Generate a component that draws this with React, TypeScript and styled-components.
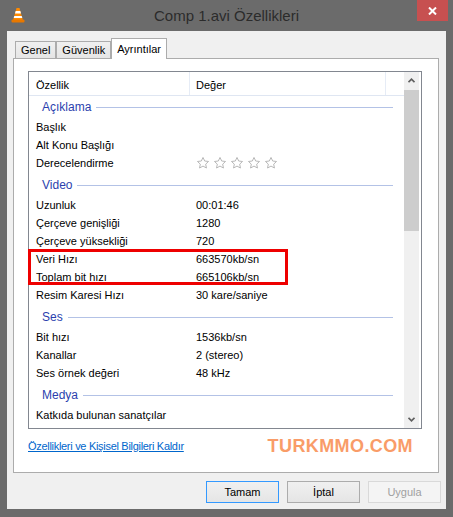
import React from "react";
import styled, { createGlobalStyle } from "styled-components";

const GlobalStyle = createGlobalStyle`
  html, body {
    margin: 0;
    padding: 0;
    background: #6b6b6b;
  }
  body {
    font-family: "Liberation Sans", Arial, sans-serif;
    font-size: 11px;
    color: #000;
  }
  *, *::before, *::after {
    box-sizing: border-box;
  }
`;

const Window = styled.div`
  width: 453px;
  height: 517px;
  background: #6b6b6b;
  display: flex;
  flex-direction: column;
`;

const TitleBar = styled.div`
  height: 31px;
  display: grid;
  grid-template-columns: 1fr auto 1fr;
  align-items: start;
`;

const AppIcon = styled.div`
  padding: 7px 0 0 11px;
  line-height: 0;
`;

const Title = styled.div`
  padding-top: 7px;
  font-size: 15px;
  line-height: 18px;
  color: #2b2b2b;
  white-space: nowrap;
`;

const CloseButton = styled.div`
  justify-self: end;
  margin-right: 5px;
  width: 31px;
  height: 21px;
  background: #c75050;
  display: flex;
  align-items: center;
  justify-content: center;
`;

const Client = styled.div`
  flex: 1;
  margin: 0 7px 8px;
  background: #f0f0f0;
  padding: 7px 0 6px;
  display: flex;
  flex-direction: column;
`;

const TabRow = styled.div`
  height: 20px;
  margin-left: 8px;
  display: flex;
  align-items: flex-end;
  position: relative;
  z-index: 1;
`;

const Tab = styled.div<{ $active?: boolean }>`
  height: ${p => (p.$active ? "21px" : "17px")};
  margin-bottom: ${p => (p.$active ? "-1px" : "0")};
  padding: ${p => (p.$active ? "3px 5px 0" : "1px 5px 0")};
  border: 1px solid #acacac;
  border-bottom: none;
  background: ${p => (p.$active ? "#fff" : "linear-gradient(#f0f0f0, #e5e5e5)")};
  line-height: 14px;
  white-space: nowrap;
`;

const Panel = styled.div`
  height: 415px;
  margin: 0 7px 0 6px;
  border: 1px solid #acacac;
  background: #fff;
  padding: 12px 16px 0 14px;
`;

const ListBox = styled.div`
  width: 394px;
  height: 358px;
  border: 1px solid #828790;
  display: flex;
`;

const ListContent = styled.div`
  flex: 1;
  display: flex;
  flex-direction: column;
`;

const HeaderRow = styled.div`
  height: 24px;
  display: grid;
  grid-template-columns: 161px 196px 1fr;
  border-bottom: 1px solid #dfe6f2;
`;

const HeaderCell = styled.div<{ $pad: number }>`
  padding: 3px 0 0 ${p => p.$pad}px;
  display: flex;
  align-items: center;
  border-right: 1px solid #e6ecf6;
`;

const GroupHeader = styled.div<{ $first?: boolean }>`
  height: ${p => (p.$first ? "22px" : "24px")};
  padding: ${p => (p.$first ? "0" : "2px")} 11px 0 13px;
  display: flex;
  align-items: center;
  font-size: 12px;
  color: #2b3fae;

  &::after {
    content: "";
    flex: 1;
    height: 1px;
    margin-left: 5px;
    background: #b3c2e6;
  }
`;

const Row = styled.div`
  height: 18px;
  display: grid;
  grid-template-columns: 160px 1fr;
  align-items: center;
  white-space: nowrap;

  & > span {
    padding-left: 7px;
  }
`;

// red frame drawn over a run of rows
const Highlight = styled.div`
  position: relative;

  &::after {
    content: "";
    position: absolute;
    left: -1px;
    top: -1px;
    width: 260px;
    height: 36px;
    border: 3px solid #ee0000;
  }
`;

const Stars = styled.span`
  display: flex;
  gap: 3px;
  line-height: 0;
`;

const ScrollBar = styled.div`
  width: 15px;
  margin-right: 2px;
  background: #f0f0f0;
  display: flex;
  flex-direction: column;
`;

const ScrollArrow = styled.div`
  height: 17px;
  display: flex;
  align-items: center;
  justify-content: center;
`;

const Thumb = styled.div`
  height: 141px;
  margin-top: 1px;
  background: #cdcdcd;
`;

const Track = styled.div`
  flex: 1;
`;

const Footer = styled.div`
  height: 18px;
  margin-top: 8px;
  display: flex;
  align-items: center;
  justify-content: space-between;
`;

const RemoveLink = styled.a`
  color: #0066cc;
  text-decoration: underline;
  letter-spacing: -0.3px;
  cursor: pointer;
`;

const Watermark = styled.div`
  margin-right: 9px;
  font-size: 18px;
  font-weight: bold;
  letter-spacing: 0.4px;
  color: #f99c68;
`;

const ButtonRow = styled.div`
  margin: 8px 5px 0 0;
  display: flex;
  justify-content: flex-end;
  gap: 8px;
`;

const Button = styled.button<{ $default?: boolean }>`
  width: 73px;
  height: 22px;
  padding: 0;
  font-family: inherit;
  font-size: 11px;
  color: #000;
  border: 1px solid ${p => (p.$default ? "#3399ff" : "#acacac")};
  background: linear-gradient(#f0f0f0, #e5e5e5);

  &:disabled {
    color: #a0a0a0;
    border-color: #d9d9d9;
    background: #f4f4f4;
  }
`;

type Item = { name: string; value?: string; rating?: boolean };
type Group = { title: string; items: (Item | Item[])[] };

const groups: Group[] = [
  {
    title: "Açıklama",
    items: [
      { name: "Başlık" },
      { name: "Alt Konu Başlığı" },
      { name: "Derecelendirme", rating: true },
    ],
  },
  {
    title: "Video",
    items: [
      { name: "Uzunluk", value: "00:01:46" },
      { name: "Çerçeve genişliği", value: "1280" },
      { name: "Çerçeve yüksekliği", value: "720" },
      [
        { name: "Veri Hızı", value: "663570kb/sn" },
        { name: "Toplam bit hızı", value: "665106kb/sn" },
      ],
      { name: "Resim Karesi Hızı", value: "30 kare/saniye" },
    ],
  },
  {
    title: "Ses",
    items: [
      { name: "Bit hızı", value: "1536kb/sn" },
      { name: "Kanallar", value: "2 (stereo)" },
      { name: "Ses örnek değeri", value: "48 kHz" },
    ],
  },
  {
    title: "Medya",
    items: [{ name: "Katkıda bulunan sanatçılar" }],
  },
];

const ConeIcon = () => (
  <svg width="14" height="16" viewBox="0 0 14 16">
    <path d="M5.5 1 H8.5 L12 13.5 H2 Z" fill="#ff8a00" />
    <path d="M4.66 4 H9.34 L10.04 6.5 H3.96 Z" fill="#fff" />
    <path d="M3.26 9 H10.74 L11.3 11 H2.7 Z" fill="#fff" />
    <rect x="0.5" y="12.5" width="13" height="3" rx="1" fill="#e87800" />
  </svg>
);

const CloseIcon = () => (
  <svg width="9" height="8" viewBox="0 0 9 8">
    <path d="M1 0.5 L8 7.5 M8 0.5 L1 7.5" stroke="#fff" strokeWidth="2" />
  </svg>
);

const Star = () => (
  <svg width="14" height="14" viewBox="0 0 24 24">
    <path
      d="M12 2.5l2.9 6.1 6.6.8-4.9 4.6 1.3 6.6L12 17.3l-5.9 3.3 1.3-6.6-4.9-4.6 6.6-.8z"
      fill="#fff"
      stroke="#b3b3b3"
      strokeWidth="1.6"
      strokeLinejoin="round"
    />
  </svg>
);

const Chevron = ({ down }: { down?: boolean }) => (
  <svg width="7" height="5" viewBox="0 0 7 5">
    <polyline
      points={down ? "0.5,0.8 3.5,3.8 6.5,0.8" : "0.5,4.2 3.5,1.2 6.5,4.2"}
      fill="none"
      stroke="#606060"
      strokeWidth="1.7"
    />
  </svg>
);

const PropertyRow = ({ item }: { item: Item }) => (
  <Row>
    <span>{item.name}</span>
    {item.rating ? (
      <Stars>
        {[0, 1, 2, 3, 4].map(i => (
          <Star key={i} />
        ))}
      </Stars>
    ) : (
      <span>{item.value}</span>
    )}
  </Row>
);

export default function App() {
  return (
    <>
      <GlobalStyle />
      <Window>
        <TitleBar>
          <AppIcon>
            <ConeIcon />
          </AppIcon>
          <Title>Comp 1.avi Özellikleri</Title>
          <CloseButton>
            <CloseIcon />
          </CloseButton>
        </TitleBar>
        <Client>
          <TabRow>
            <Tab>Genel</Tab>
            <Tab>Güvenlik</Tab>
            <Tab $active>Ayrıntılar</Tab>
          </TabRow>
          <Panel>
            <ListBox>
              <ListContent>
                <HeaderRow>
                  <HeaderCell $pad={7}>Özellik</HeaderCell>
                  <HeaderCell $pad={6}>Değer</HeaderCell>
                  <div />
                </HeaderRow>
                {groups.map((g, gi) => (
                  <div key={g.title}>
                    <GroupHeader $first={gi === 0}>{g.title}</GroupHeader>
                    {g.items.map((it, i) =>
                      Array.isArray(it) ? (
                        <Highlight key={i}>
                          {it.map(sub => (
                            <PropertyRow key={sub.name} item={sub} />
                          ))}
                        </Highlight>
                      ) : (
                        <PropertyRow key={it.name} item={it} />
                      )
                    )}
                  </div>
                ))}
              </ListContent>
              <ScrollBar>
                <ScrollArrow>
                  <Chevron />
                </ScrollArrow>
                <Thumb />
                <Track />
                <ScrollArrow>
                  <Chevron down />
                </ScrollArrow>
              </ScrollBar>
            </ListBox>
            <Footer>
              <RemoveLink>Özellikleri ve Kişisel Bilgileri Kaldır</RemoveLink>
              <Watermark>TURKMMO.COM</Watermark>
            </Footer>
          </Panel>
          <ButtonRow>
            <Button $default>Tamam</Button>
            <Button>İptal</Button>
            <Button disabled>Uygula</Button>
          </ButtonRow>
        </Client>
      </Window>
    </>
  );
}
